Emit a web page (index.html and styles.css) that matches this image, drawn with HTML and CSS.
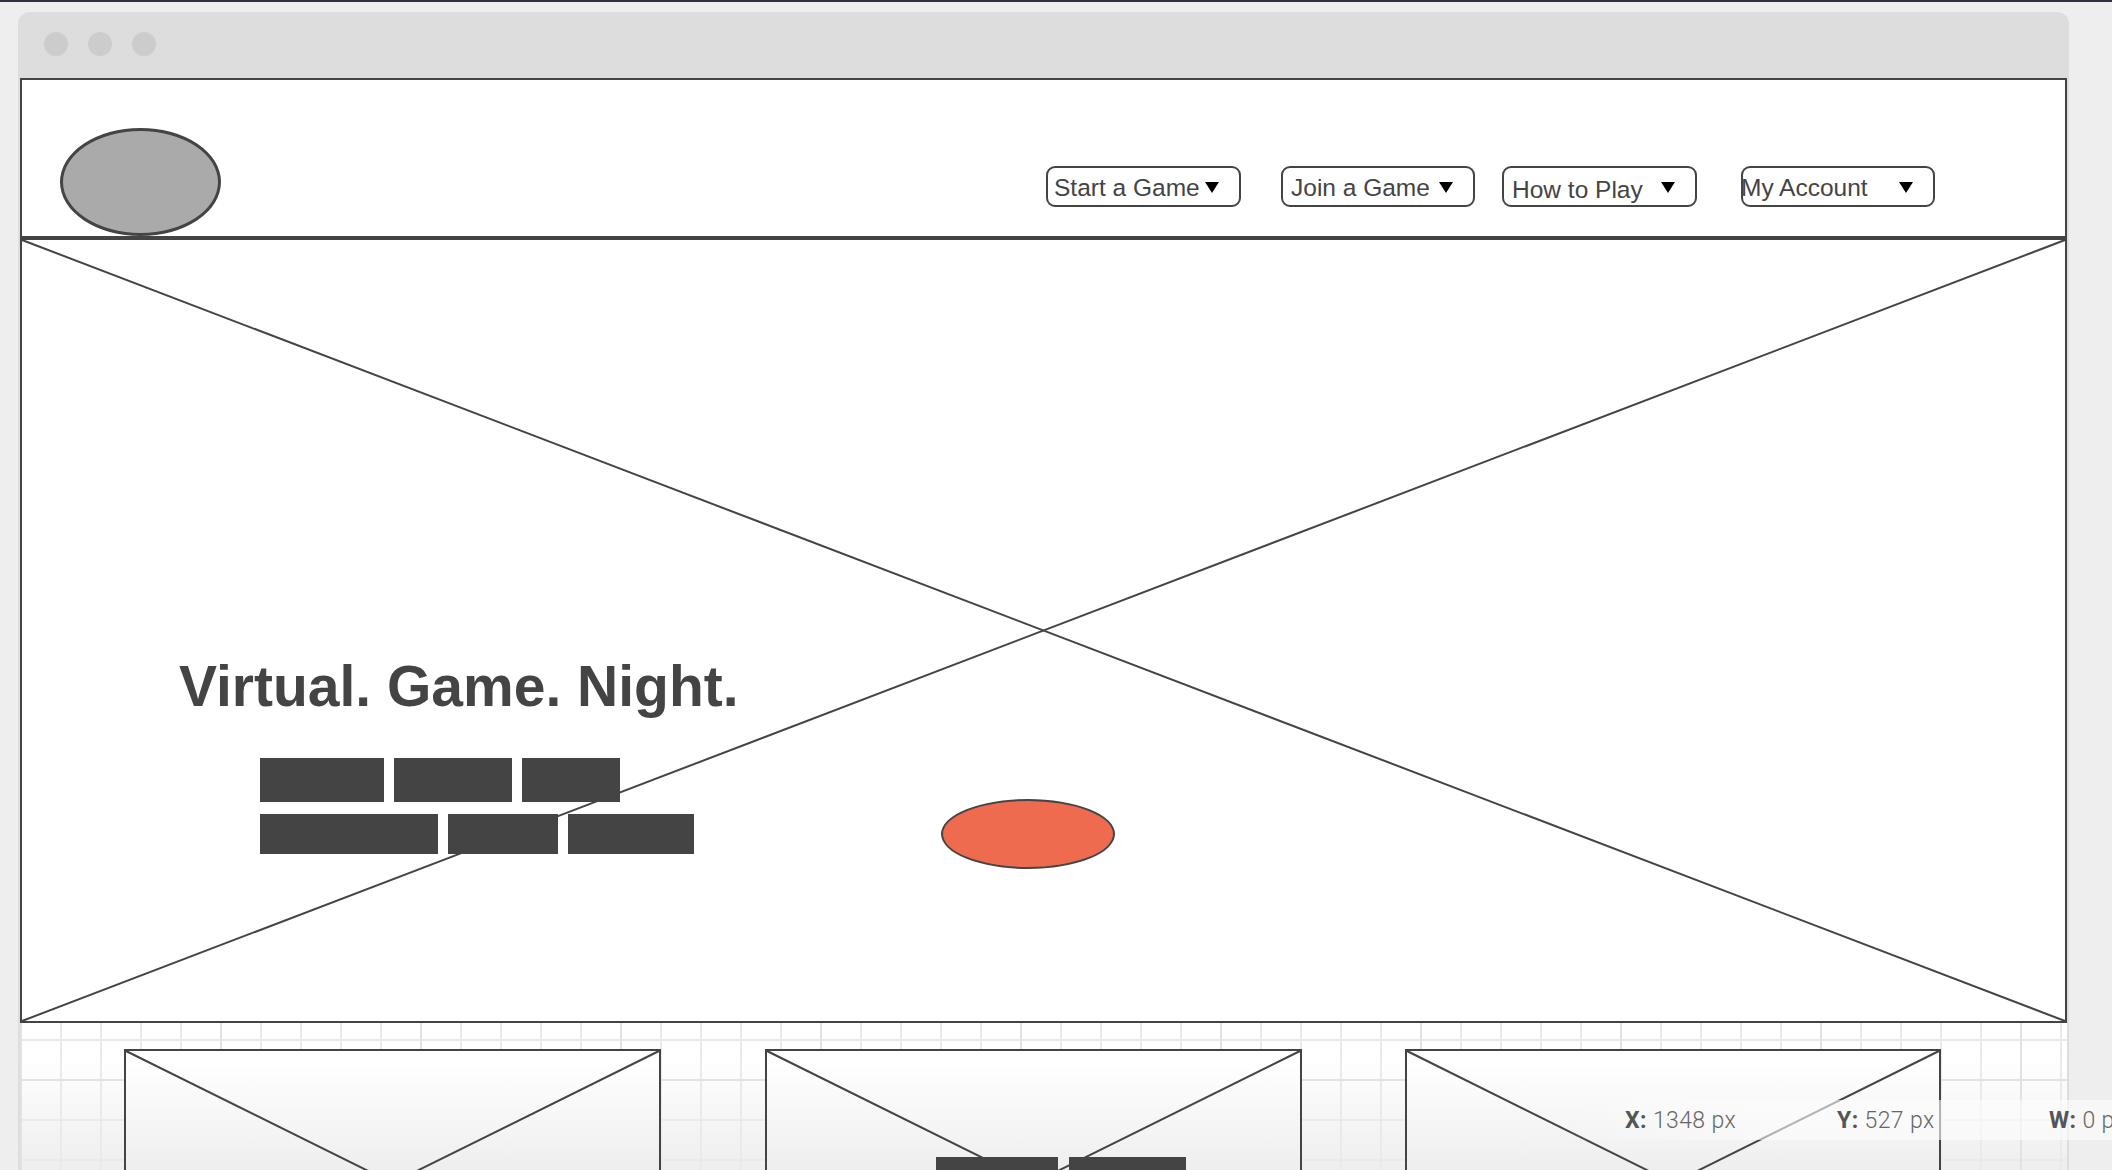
FILE: index.html
```html
<!DOCTYPE html>
<html lang="en">
<head>
<meta charset="utf-8">
<title>Virtual Game Night – Wireframe</title>
<link rel="stylesheet" href="styles.css">
</head>
<body>
<div class="topbar"></div>
<div class="window">
  <div class="titlebar">
    <span class="dot"></span><span class="dot"></span><span class="dot"></span>
  </div>
  <div class="canvas">
    <div class="page">
      <header class="header">
        <div class="logo"></div>
        <nav class="nav">
          <div class="nav-item nav-start"><span class="nav-label">Start a Game</span><span class="caret"></span></div>
          <div class="nav-item nav-join"><span class="nav-label">Join a Game</span><span class="caret"></span></div>
          <div class="nav-item nav-how"><span class="nav-label">How to Play</span><span class="caret"></span></div>
          <div class="nav-item nav-account"><span class="nav-label">My Account</span><span class="caret"></span></div>
        </nav>
      </header>
      <section class="hero">
        <svg class="xmark" preserveAspectRatio="none" viewBox="0 0 100 100">
          <line x1="0" y1="0" x2="100" y2="100" vector-effect="non-scaling-stroke"/>
          <line x1="100" y1="0" x2="0" y2="100" vector-effect="non-scaling-stroke"/>
        </svg>
        <div class="hero-content">
          <h1 class="hero-title">Virtual. Game. Night.</h1>
          <div class="hero-row">
            <div class="blocks">
              <div class="block-row row-tall">
                <span class="block" style="width:124px"></span>
                <span class="block" style="width:118px"></span>
                <span class="block" style="width:98px"></span>
              </div>
              <div class="block-row">
                <span class="block" style="width:178px"></span>
                <span class="block" style="width:110px"></span>
                <span class="block" style="width:126px"></span>
              </div>
            </div>
            <div class="cta"></div>
          </div>
        </div>
      </section>
    </div>
    <div class="cards">
      <div class="card">
        <svg class="xmark" preserveAspectRatio="none" viewBox="0 0 100 100">
          <line x1="0" y1="0" x2="100" y2="100" vector-effect="non-scaling-stroke"/>
          <line x1="100" y1="0" x2="0" y2="100" vector-effect="non-scaling-stroke"/>
        </svg>
      </div>
      <div class="card">
        <svg class="xmark" preserveAspectRatio="none" viewBox="0 0 100 100">
          <line x1="0" y1="0" x2="100" y2="100" vector-effect="non-scaling-stroke"/>
          <line x1="100" y1="0" x2="0" y2="100" vector-effect="non-scaling-stroke"/>
        </svg>
        <div class="card-content">
          <span class="block card-block" style="width:122px"></span>
          <span class="block card-block" style="width:117px"></span>
        </div>
      </div>
      <div class="card card-last">
        <svg class="xmark" preserveAspectRatio="none" viewBox="0 0 100 100">
          <line x1="0" y1="0" x2="100" y2="100" vector-effect="non-scaling-stroke"/>
          <line x1="100" y1="0" x2="0" y2="100" vector-effect="non-scaling-stroke"/>
        </svg>
      </div>
    </div>
  </div>
</div>
<div class="statusbar">
  <span class="stat"><b>X:</b> 1348 px</span>
  <span class="stat"><b>Y:</b> 527 px</span>
  <span class="stat stat-last"><b>W:</b> 0 px</span>
</div>
</body>
</html>
```

FILE: styles.css
```css
* { box-sizing: border-box; }

html, body {
  margin: 0;
  padding: 0;
}

body {
  position: relative;
  width: 2112px;
  height: 1170px;
  overflow: hidden;
  background: #eeeeee;
  font-family: "Liberation Sans", Arial, sans-serif;
}

.topbar {
  height: 2px;
  background: #2f323a;
}

.window {
  margin: 10px 0 0 18px;
  width: 2051px;
  height: 1158px;
  background: #dddddd;
  border-radius: 12px 12px 0 0;
}

.titlebar {
  height: 66px;
  padding: 0 0 2px 26px;
  display: flex;
  align-items: center;
  gap: 20px;
}

.dot {
  width: 24px;
  height: 24px;
  border-radius: 50%;
  background: #cccccc;
}

.canvas {
  position: relative;
  margin: 0 2px;
  height: 1092px;
  overflow: hidden;
  background-color: #ffffff;
  background-image:
    linear-gradient(to right, #e2e2e2 2px, transparent 2px),
    linear-gradient(to bottom, #e2e2e2 2px, transparent 2px),
    linear-gradient(to right, #eaeaea 2px, transparent 2px),
    linear-gradient(to bottom, #eaeaea 2px, transparent 2px),
    linear-gradient(to bottom, #ffffff 980px, #eeeeee 1092px);
  background-size: 200px 200px, 200px 200px, 40px 40px, 40px 40px, 100% 100%;
  background-position: 0 1px, 0 1px, 0 1px, 0 1px, 0 0;
  background-repeat: repeat, repeat, repeat, repeat, no-repeat;
}

.page {
  border: 2px solid #444444;
  background: #ffffff;
}

.header {
  height: 160px;
  display: flex;
  padding-left: 38px;
  border-bottom: 4px solid #444444;
}

.logo {
  align-self: flex-end;
  width: 161px;
  height: 108px;
  border-radius: 50%;
  background: #aaaaaa;
  border: 3px solid #444444;
  flex: none;
}

.nav {
  display: flex;
  margin-left: auto;
  margin-right: 130px;
  margin-bottom: 29px;
  align-self: flex-end;
}

.nav-item {
  width: 194px;
  height: 41px;
  border: 2px solid #444444;
  border-radius: 9px;
  display: flex;
  align-items: center;
  justify-content: space-between;
  padding-left: 8px;
  background: #ffffff;
  color: #444444;
  font-size: 24.5px;
  white-space: nowrap;
}

.nav-label {
  padding-top: 3px;
}

.nav-start { width: 195px; padding-left: 6px; }
.nav-join { margin-left: 40px; }
.nav-how { margin-left: 27px; width: 195px; }
.nav-how .nav-label { padding-top: 7px; }
.nav-account { margin-left: 44px; padding-left: 0; }
.nav-account .nav-label { margin-left: -2px; }

.caret {
  width: 0;
  height: 0;
  margin: 2px 20px 0 0;
  border-left: 7.5px solid transparent;
  border-right: 7.5px solid transparent;
  border-top: 11px solid #000000;
}

.hero {
  position: relative;
  height: 781px;
}

.xmark {
  position: absolute;
  left: 0;
  top: 0;
  width: 100%;
  height: 100%;
  overflow: visible;
}

.xmark line {
  stroke: #444444;
  stroke-width: 2px;
}

.hero-content {
  position: relative;
  padding: 414px 0 0 157px;
}

.hero-title {
  margin: 0;
  font-family: "Liberation Sans", Arial, sans-serif;
  font-weight: 700;
  font-size: 57px;
  line-height: 65px;
  color: #444444;
}

.hero-row {
  display: flex;
  align-items: flex-start;
  margin: 39px 0 0 81px;
}

.blocks {
  display: flex;
  flex-direction: column;
  gap: 12px;
}

.block-row {
  display: flex;
  gap: 10px;
  height: 40px;
}

.block-row.row-tall {
  height: 44px;
}

.block {
  display: block;
  height: 100%;
  background: #444444;
}

.cta {
  width: 174px;
  height: 70px;
  margin: 41px 0 0 247px;
  border-radius: 50%;
  background: #ef6b4f;
  border: 2px solid #444444;
}

.cards {
  display: flex;
  gap: 103.5px;
  padding-left: 104px;
  margin-top: 26px;
}

.card {
  position: relative;
  flex: none;
  width: 537px;
  height: 268px;
  border: 2px solid #444444;
  background: linear-gradient(to bottom, #ffffff 10px, #eeeeee 121px, #eeeeee);
}

.card-last { width: 536px; }

.card-content {
  position: relative;
  display: flex;
  gap: 11px;
  padding: 106px 0 0 169px;
}

.card-block {
  height: 40px;
}

.statusbar {
  position: absolute;
  left: 1560px;
  right: 0;
  top: 1100px;
  height: 40px;
  display: flex;
  align-items: center;
  padding-left: 65px;
  background: linear-gradient(to right, rgba(253, 253, 253, 0) 0, rgba(253, 253, 253, 0.6) 220px);
  font-family: Roboto, "Liberation Sans", sans-serif;
  font-size: 23px;
  letter-spacing: 0.4px;
  font-weight: 300;
  color: #666666;
  white-space: nowrap;
  overflow: hidden;
}

.stat {
  flex: none;
  width: 212px;
}

.stat-last {
  width: auto;
}

.stat b {
  font-weight: 700;
  color: #555555;
}
```
